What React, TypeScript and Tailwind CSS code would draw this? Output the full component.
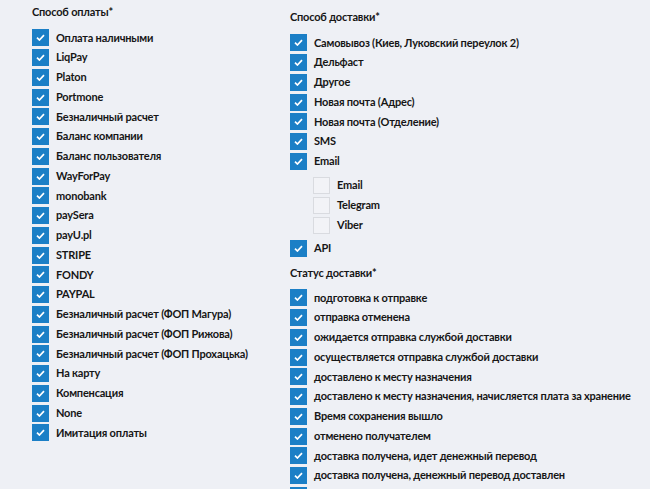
const payments = [
  "Оплата наличными",
  "LiqPay",
  "Platon",
  "Portmone",
  "Безналичный расчет",
  "Баланс компании",
  "Баланс пользователя",
  "WayForPay",
  "monobank",
  "paySera",
  "payU.pl",
  "STRIPE",
  "FONDY",
  "PAYPAL",
  "Безналичный расчет (ФОП Магура)",
  "Безналичный расчет (ФОП Рижова)",
  "Безналичный расчет (ФОП Прохацька)",
  "На карту",
  "Компенсация",
  "None",
  "Имитация оплаты",
];

const deliveries = [
  "Самовывоз (Киев, Луковский переулок 2)",
  "Дельфаст",
  "Другое",
  "Новая почта (Адрес)",
  "Новая почта (Отделение)",
  "SMS",
  "Email",
];

const notifications = ["Email", "Telegram", "Viber"];

const statuses = [
  "подготовка к отправке",
  "отправка отменена",
  "ожидается отправка службой доставки",
  "осуществляется отправка службой доставки",
  "доставлено к месту назначения",
  "доставлено к месту назначения, начисляется плата за хранение",
  "Время сохранения вышло",
  "отменено получателем",
  "доставка получена, идет денежный перевод",
  "доставка получена, денежный перевод доставлен",
  "возвращено отправителю",
];

const Check = ({ label, checked = true }: { label: string; checked?: boolean }) => (
  <label className="flex h-[19.75px] items-center gap-[7px]">
    {checked ? (
      <span className="flex h-[17px] w-[17px] shrink-0 items-center justify-center bg-[#1b7fc6]">
        <svg width="9" height="7" viewBox="0 0 9 7" fill="none">
          <path d="M1 3.6 3.4 6 8 1.2" stroke="white" strokeWidth="1.7" />
        </svg>
      </span>
    ) : (
      <span className="h-[17px] w-[17px] shrink-0 border border-[#d9dbe0] bg-[#f2f3f7]" />
    )}
    <span className="whitespace-nowrap">{label}</span>
  </label>
);

const Title = ({ children }: { children: string }) => (
  <div className="flex h-[20px] items-center">{children}</div>
);

export default function App() {
  return (
    <div
      className="flex min-h-screen bg-[#eef0f5] px-[32px] text-[11px] font-bold tracking-[-0.2px] text-[#161616]"
      style={{ fontFamily: 'Lato, "Liberation Sans", sans-serif' }}
    >
      <div className="w-[258px] shrink-0 pt-[2px]">
        <Title>Способ оплаты*</Title>
        <div className="mt-[6px]">
          {payments.map((p) => (
            <Check key={p} label={p} />
          ))}
        </div>
      </div>

      <div className="pt-[7px]">
        <Title>Способ доставки*</Title>
        <div className="mt-[6px]">
          {deliveries.map((d) => (
            <Check key={d} label={d} />
          ))}
        </div>
        <div className="mt-[4px] pl-[23px]">
          {notifications.map((n) => (
            <div key={n} className="h-[20px]">
              <Check label={n} checked={false} />
            </div>
          ))}
        </div>
        <div className="mt-[3px]">
          <Check label="API" />
        </div>
        <div className="mt-[5px]">
          <Title>Статус доставки*</Title>
        </div>
        <div className="mt-[5px]">
          {statuses.map((s) => (
            <Check key={s} label={s} />
          ))}
        </div>
      </div>
    </div>
  );
}
